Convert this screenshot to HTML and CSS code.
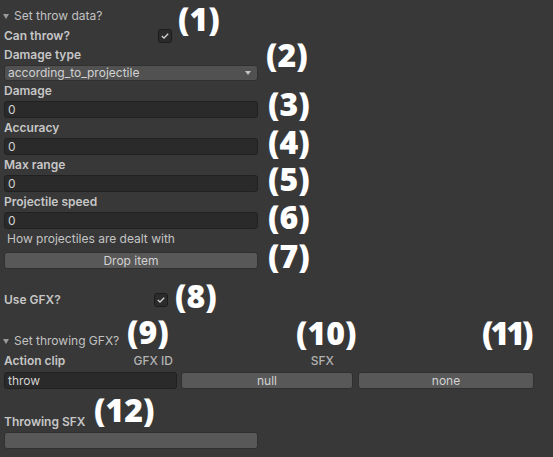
FILE: index.html
```html
<!DOCTYPE html>
<html>
<head>
<meta charset="utf-8">
<link rel="stylesheet" href="styles.css">
</head>
<body>
<div class="panel">
  <div class="foldout"><span class="arrow"></span><span>Set throw data?</span></div>
  <div class="toggle-row indent"><span class="label">Can throw?</span><span class="check"><svg width="8" height="6" viewBox="0 0 8 6"><polyline points="0.8,3 3,5 7.2,0.8" fill="none" stroke="#d4d4d4" stroke-width="1.3"/></svg></span></div>

  <div class="label field-label">Damage type</div>
  <div class="dropdown"><span>according_to_projectile</span><span class="dd-arrow"></span></div>

  <div class="label field-label">Damage</div>
  <div class="input">0</div>

  <div class="label field-label">Accuracy</div>
  <div class="input">0</div>

  <div class="label field-label">Max range</div>
  <div class="input">0</div>

  <div class="label field-label">Projectile speed</div>
  <div class="input">0</div>

  <div class="help">How projectiles are dealt with</div>
  <div class="button">Drop item</div>

  <div class="toggle-row gfx"><span class="label">Use GFX?</span><span class="check"><svg width="8" height="6" viewBox="0 0 8 6"><polyline points="0.8,3 3,5 7.2,0.8" fill="none" stroke="#d4d4d4" stroke-width="1.3"/></svg></span></div>

  <div class="foldout second"><span class="arrow"></span><span>Set throwing GFX?</span></div>
  <div class="grid-head">
    <div class="head-cell first"><span class="label">Action clip</span><span class="sub">GFX ID</span></div>
    <div class="head-cell sfx"><span class="sub">SFX</span></div>
    <div class="head-cell"></div>
  </div>
  <div class="grid-row">
    <div class="input">throw</div>
    <div class="button">null</div>
    <div class="button">none</div>
  </div>

  <div class="label field-label sfx-label">Throwing SFX</div>
  <div class="button"></div>
</div>

<div class="note n1">(1)</div>
<div class="note n2">(2)</div>
<div class="note n3">(3)</div>
<div class="note n4">(4)</div>
<div class="note n5">(5)</div>
<div class="note n6">(6)</div>
<div class="note n7">(7)</div>
<div class="note n8">(8)</div>
<div class="note n9">(9)</div>
<div class="note n10">(10)</div>
<div class="note n11">(11)</div>
<div class="note n12">(12)</div>
</body>
</html>
```
FILE: styles.css
```css
html, body {
  margin: 0;
  padding: 0;
  background: #383838;
  width: 553px;
  height: 457px;
  overflow: hidden;
  font-family: Inter, "Noto Sans", sans-serif;
  font-size: 12px;
  color: #c4c4c4;
}

.panel {
  padding: 6px 0 0 4px;
  width: 531px;
  display: flex;
  flex-direction: column;
}

.foldout {
  height: 20px;
  line-height: 20px;
  display: flex;
  align-items: center;
  margin-left: -1px;
  color: #c2c2c2;
}

.foldout.second {
  margin-top: 22px;
}

.arrow {
  width: 0;
  height: 0;
  border-left: 3.5px solid transparent;
  border-right: 3.5px solid transparent;
  border-top: 5px solid #9a9a9a;
  margin-right: 5px;
}

.label {
  font-weight: 600;
  color: #c6c6c6;
}

.toggle-row {
  height: 19px;
  line-height: 19px;
  display: grid;
  grid-template-columns: 150px 14px;
  align-items: center;
}

.toggle-row.indent {
  grid-template-columns: 154px 14px;
}

.toggle-row.gfx {
  margin-top: 21px;
}

.check {
  width: 12px;
  height: 12px;
  border: 1px solid #1c1c1c;
  background: #2b2b2b;
  border-radius: 3px;
  display: flex;
  align-items: center;
  justify-content: center;
}

.field-label {
  line-height: 20px;
  height: 20px;
}

.dropdown, .input, .button {
  box-sizing: border-box;
  height: 17px;
  width: 254px;
  border-radius: 3px;
  line-height: 15px;
  color: #d2d2d2;
}

.dropdown {
  height: 16px;
  line-height: 14px;
  background: #515151;
  border: 1px solid #303030;
  padding: 0 6px 0 3px;
  display: flex;
  align-items: center;
  justify-content: space-between;
}

.dd-arrow {
  width: 0;
  height: 0;
  border-left: 3.5px solid transparent;
  border-right: 3.5px solid transparent;
  border-top: 4px solid #c4c4c4;
}

.input {
  background: #2a2a2a;
  border: 1px solid #212121;
  padding: 0 3px;
}

.button {
  background: #585858;
  border: 1px solid #303030;
  text-align: center;
}

.help {
  line-height: 20px;
  height: 20px;
  padding-left: 3px;
  margin-bottom: 3px;
  color: #c4c4c4;
}

.grid-head, .grid-row {
  display: grid;
  grid-template-columns: 173px 172px 177px;
  column-gap: 4px;
}

.grid-row {
  margin-top: 1px;
}

.grid-row > :nth-child(3) {
  margin-left: 1px;
}

.grid-row > * {
  width: auto;
}

.head-cell {
  height: 20px;
  line-height: 20px;
  display: flex;
}

.head-cell.first {
  justify-content: space-between;
  padding-right: 4px;
}

.head-cell.sfx {
  justify-content: flex-end;
  padding-right: 19px;
}

.sub {
  color: #b2b2b2;
  font-weight: 500;
}

.sfx-label {
  margin-top: 23px;
}

.note {
  position: absolute;
  font-family: "Open Sans", sans-serif;
  font-weight: 800;
  font-size: 32px;
  line-height: 30px;
  height: 30px;
  color: #ffffff;
  white-space: nowrap;
}

.n1 { top: 4px; left: 178px; }
.n2 { top: 40px; left: 266px; }
.n3 { top: 89px; left: 268px; }
.n4 { top: 127px; left: 268px; }
.n5 { top: 164px; left: 268px; }
.n6 { top: 202px; left: 268px; }
.n7 { top: 241px; left: 268px; }
.n8 { top: 281px; left: 175px; }
.n9 { top: 317px; left: 127px; }
.n10 { top: 318px; left: 296px; }
.n11 { top: 318px; left: 482px; letter-spacing: -3px; }
.n12 { top: 395px; left: 94px; }
```
